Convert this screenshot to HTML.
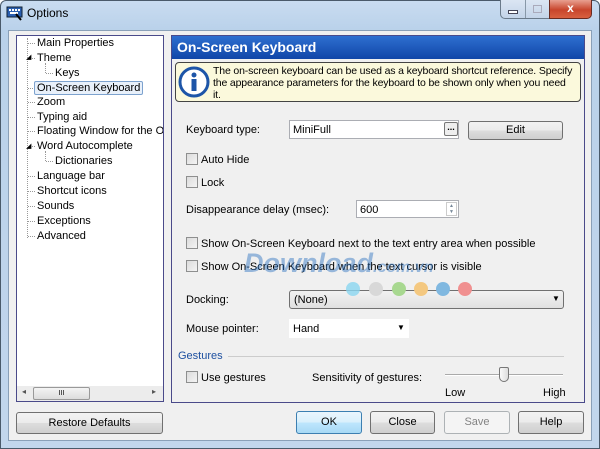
<!DOCTYPE html>
<html><head><style>
*{margin:0;padding:0;box-sizing:border-box}
body{width:600px;height:449px;overflow:hidden;background:#fff;font-family:"Liberation Sans",sans-serif;font-size:11px;color:#000;position:relative}
.a{position:absolute;white-space:nowrap}
.win{position:absolute;left:0;top:0;width:600px;height:449px;border:1px solid #4a5a6a;border-radius:6px 6px 0 0;background:linear-gradient(#c9dcf0,#b9d1ea 30px,#c2d6ec)}
.client{position:absolute;left:8px;top:30px;width:584px;height:411px;background:#f0f0f0;border:1px solid #8aa0b8}
.btn{position:absolute;border:1px solid #707070;border-radius:3px;background:linear-gradient(#f2f2f2,#ebebeb 50%,#dddddd 51%,#cfcfcf);text-align:center;font-size:11px}
.cb{position:absolute;width:12px;height:12px;border:1px solid #8e8f8f;background:linear-gradient(135deg,#dcdcdc,#f4f4f4)}
.inp{position:absolute;background:#fff;border:1px solid #abadb3}
.tl{position:absolute;border-top:1px dotted #999}
</style></head><body>
<div class="win"></div>
<svg class="a" style="left:6px;top:5px" width="18" height="16"><rect x="1" y="2" width="15" height="10" fill="#2a5fb0" stroke="#123"/><g fill="#fff"><rect x="3" y="4" width="2" height="2"/><rect x="6" y="4" width="2" height="2"/><rect x="9" y="4" width="2" height="2"/><rect x="12" y="4" width="2" height="2"/><rect x="4" y="7" width="8" height="2"/></g><path d="M10 9l5 6" stroke="#000" stroke-width="2"/></svg>
<div class="a" style="left:27px;top:6px;font-size:12px">Options</div>
<div class="a" style="left:500px;top:0;width:49px;height:19px;border:1px solid #6a7a8a;border-top:none;border-right:none;border-radius:0 0 0 5px;background:linear-gradient(#dbe6f3,#c3d4e8)">
 <div class="a" style="left:24px;top:0;height:18px;border-left:1px solid #8898a8"></div>
 <div class="a" style="left:7px;top:10px;width:10px;height:4px;background:#fff;border:1px solid #445"></div>
 <div class="a" style="left:32px;top:5px;width:9px;height:8px;border:1px solid #aab"></div>
</div>
<div class="a" style="left:549px;top:0;width:43px;height:19px;border:1px solid #6a2a20;border-top:none;border-radius:0 0 5px 0;background:linear-gradient(#e8a090,#c8452c 55%,#d86040);color:#fff;font-weight:bold;font-size:12px;text-align:center;line-height:17px">x</div>
<div class="client"></div>
<div class="a" style="left:16px;top:35px;width:148px;height:367px;background:#fff;border:1px solid #4a4a8a"></div>
<div class="a" style="left:27px;top:38px;height:200px;border-left:1px dotted #999"></div>
<div class="tl" style="left:28px;top:43px;width:7px"></div><div class="a" style="left:37px;top:37px">Main Properties</div>
<div class="a" style="left:26px;top:53px;font-size:7px">◢</div><div class="tl" style="left:32px;top:58px;width:3px"></div><div class="a" style="left:37px;top:52px">Theme</div>
<div class="a" style="left:45px;top:63px;height:10px;border-left:1px dotted #999"></div><div class="tl" style="left:46px;top:73px;width:7px"></div><div class="a" style="left:55px;top:67px">Keys</div>
<div class="tl" style="left:28px;top:88px;width:5px"></div><div class="a" style="left:34px;top:81px;height:14px;padding:0 2px;border:1px solid #7da2ce;border-radius:2px;background:#e8f0fa;line-height:12px">On-Screen Keyboard</div>
<div class="tl" style="left:28px;top:102px;width:7px"></div><div class="a" style="left:37px;top:96px">Zoom</div>
<div class="tl" style="left:28px;top:117px;width:7px"></div><div class="a" style="left:37px;top:111px">Typing aid</div>
<div class="tl" style="left:28px;top:131px;width:7px"></div><div class="a" style="left:37px;top:125px;width:126px;overflow:hidden">Floating Window for the On-Screen</div>
<div class="a" style="left:26px;top:142px;font-size:7px">◢</div><div class="tl" style="left:32px;top:146px;width:3px"></div><div class="a" style="left:37px;top:140px">Word Autocomplete</div>
<div class="a" style="left:45px;top:151px;height:10px;border-left:1px dotted #999"></div><div class="tl" style="left:46px;top:161px;width:7px"></div><div class="a" style="left:55px;top:155px">Dictionaries</div>
<div class="tl" style="left:28px;top:176px;width:7px"></div><div class="a" style="left:37px;top:170px">Language bar</div>
<div class="tl" style="left:28px;top:191px;width:7px"></div><div class="a" style="left:37px;top:185px">Shortcut icons</div>
<div class="tl" style="left:28px;top:206px;width:7px"></div><div class="a" style="left:37px;top:200px">Sounds</div>
<div class="tl" style="left:28px;top:221px;width:7px"></div><div class="a" style="left:37px;top:215px">Exceptions</div>
<div class="tl" style="left:28px;top:236px;width:7px"></div><div class="a" style="left:37px;top:230px">Advanced</div>
<div class="a" style="left:17px;top:386px;width:146px;height:15px;background:#ececec"></div>
<div class="a" style="left:22px;top:387px;font-size:8px;color:#555">◂</div>
<div class="a" style="left:152px;top:387px;font-size:8px;color:#555">▸</div>
<div class="a" style="left:33px;top:387px;width:57px;height:13px;border:1px solid #999;border-radius:2px;background:linear-gradient(#f4f4f4,#dcdcdc);text-align:center;font-size:7px;line-height:11px">III</div>
<div class="btn" style="left:16px;top:412px;width:147px;height:22px;line-height:20px">Restore Defaults</div>
<div class="a" style="left:171px;top:35px;width:414px;height:368px;border:1px solid #4a4a8a"></div>
<div class="a" style="left:172px;top:36px;width:412px;height:23px;background:linear-gradient(#2e6fd0,#1046a8);color:#fff;font-weight:bold;font-size:14px;padding:3px 0 0 5px">On-Screen Keyboard</div>
<div class="a" style="left:175px;top:62px;width:406px;height:40px;background:#fbf9dc;border:1px solid #444;border-radius:4px"></div>
<svg class="a" style="left:178px;top:66px" width="32" height="32"><circle cx="16" cy="16" r="14" fill="#fff" stroke="#1d55a8" stroke-width="3"/><circle cx="16" cy="9" r="2.5" fill="#1d55a8"/><rect x="13.5" y="13" width="5" height="12" fill="#1d55a8"/></svg>
<div class="a" style="left:213px;top:65px;line-height:12px;font-size:10.5px;letter-spacing:-0.15px">The on-screen keyboard can be used as a keyboard shortcut reference. Specify<br>the appearance parameters for the keyboard to be shown only when you need<br>it.</div>
<div class="a" style="left:186px;top:124px">Keyboard type:</div>
<div class="inp" style="left:289px;top:120px;width:170px;height:19px;padding:3px 0 0 3px">MiniFull</div>
<div class="a" style="left:444px;top:122px;width:14px;height:14px;border:1px solid #777;border-radius:2px;background:#eee;font-size:9px;text-align:center;line-height:8px;font-weight:bold">...</div>
<div class="btn" style="left:468px;top:121px;width:95px;height:19px;line-height:17px">Edit</div>
<div class="cb" style="left:186px;top:153px"></div><div class="a" style="left:201px;top:154px">Auto Hide</div>
<div class="cb" style="left:186px;top:176px"></div><div class="a" style="left:201px;top:177px">Lock</div>
<div class="a" style="left:186px;top:204px">Disappearance delay (msec):</div>
<div class="inp" style="left:356px;top:200px;width:103px;height:18px;padding:3px 0 0 3px">600</div>
<div class="a" style="left:446px;top:202px;width:11px;height:14px;border:1px solid #ccc;font-size:5px;color:#789;text-align:center;line-height:6px">▲<br>▼</div>
<div class="cb" style="left:186px;top:237px"></div><div class="a" style="left:201px;top:238px">Show On-Screen Keyboard next to the text entry area when possible</div>
<div class="cb" style="left:186px;top:260px"></div><div class="a" style="left:201px;top:261px">Show On-Screen Keyboard when the text cursor is visible</div>
<div class="a" style="left:244px;top:248px;font-size:27px;font-weight:bold;font-style:italic;color:rgba(40,110,190,.45)">Download<span style="font-size:16px">.com.vn</span></div>
<div class="a" style="left:186px;top:294px">Docking:</div>
<div class="a" style="left:289px;top:290px;width:275px;height:19px;border:1px solid #707070;border-radius:3px;background:linear-gradient(#f2f2f2,#e0e0e0);padding:3px 0 0 4px">(None)</div>
<div class="a" style="left:552px;top:294px;font-size:8px">▼</div>
<svg class="a" style="left:344px;top:281px" width="130" height="16"><circle cx="9" cy="8" r="7" fill="#8ad6f0" opacity=".8"/><circle cx="32" cy="8" r="7" fill="#d8d8d8"/><circle cx="55" cy="8" r="7" fill="#a8d890"/><circle cx="77" cy="8" r="7" fill="#f4c880"/><circle cx="99" cy="8" r="7" fill="#80b8e0"/><circle cx="121" cy="8" r="7" fill="#f09090"/></svg>
<div class="a" style="left:186px;top:323px">Mouse pointer:</div>
<div class="a" style="left:289px;top:319px;width:120px;height:19px;background:#fff;padding:4px 0 0 4px">Hand</div>
<div class="a" style="left:397px;top:323px;font-size:8px">▼</div>
<div class="a" style="left:178px;top:350px;color:#1e50a0">Gestures</div>
<div class="a" style="left:228px;top:356px;width:336px;border-top:1px solid #ccc"></div>
<div class="cb" style="left:186px;top:371px"></div><div class="a" style="left:201px;top:372px">Use gestures</div>
<div class="a" style="left:312px;top:372px">Sensitivity of gestures:</div>
<div class="a" style="left:445px;top:374px;width:118px;border-top:1px solid #aaa;border-bottom:1px solid #fff"></div>
<div class="a" style="left:499px;top:367px;width:10px;height:15px;border:1px solid #777;border-radius:2px 2px 5px 5px;background:linear-gradient(90deg,#fafafa,#ddd)"></div>
<div class="a" style="left:445px;top:387px">Low</div>
<div class="a" style="left:543px;top:387px">High</div>
<div class="btn" style="left:296px;top:411px;width:66px;height:23px;line-height:21px;border-color:#3c7fb1;background:linear-gradient(#eaf6fd,#d9f0fc 50%,#bee6fd 51%,#a7d9f5)">OK</div>
<div class="btn" style="left:370px;top:411px;width:65px;height:23px;line-height:21px">Close</div>
<div class="btn" style="left:444px;top:411px;width:66px;height:23px;line-height:21px;border-color:#adb2b5;background:#f4f4f4;color:#838383">Save</div>
<div class="btn" style="left:518px;top:411px;width:66px;height:23px;line-height:21px">Help</div>
</body></html>
